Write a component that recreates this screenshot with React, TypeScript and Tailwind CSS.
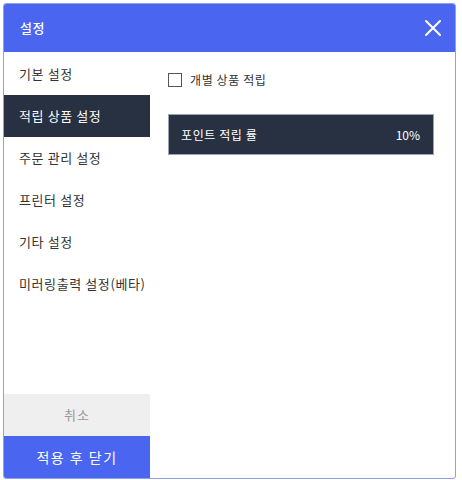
import React from "react";

export default function App() {
  const items = ["기본 설정", "적립 상품 설정", "주문 관리 설정", "프린터 설정", "기타 설정", "미러링출력 설정(베타)"];
  return (
    <div className="w-[462px] h-[480px] bg-white pt-[3px] pl-[3px]" style={{ fontFamily: '"Noto Sans CJK KR", "Noto Sans", sans-serif' }}>
      <div className="w-[453px] h-[476px] border border-[#8da0ee] rounded-[3px] overflow-hidden flex flex-col bg-white">
        <div className="h-[48px] bg-[#4a66f0] flex items-center justify-between pl-[16px] pr-[13px] shrink-0">
          <span className="text-white text-[13px] font-medium tracking-[0.5px]">설정</span>
          <svg width="18" height="18" viewBox="0 0 18 18" fill="none" stroke="white" strokeWidth="2" strokeLinecap="round">
            <path d="M2 2L16 16M16 2L2 16" />
          </svg>
        </div>
        <div className="flex flex-1 pt-[1px]">
          <div className="w-[146px] flex flex-col">
            {items.map((t, i) => (
              <div
                key={t}
                className={
                  i === 1
                    ? "h-[42px] flex items-center pl-[15px] text-[13px] tracking-[0.6px] bg-[#273142] text-white whitespace-nowrap"
                    : "h-[42px] flex items-center pl-[15px] text-[13px] tracking-[0.6px] text-[#333] whitespace-nowrap"
                }
              >
                {t}
              </div>
            ))}
            <div className="flex-1" />
            <div className="h-[42px] flex items-center justify-center bg-[#efefef] text-[#999] text-[13px] tracking-[1px]">취소</div>
            <div className="h-[42px] flex items-center justify-center bg-[#4a66f0] text-white text-[14px] tracking-[1.5px]">적용 후 닫기</div>
          </div>
          <div className="flex-1 pl-[18px] pr-[21px] pt-[20px] flex flex-col">
            <label className="flex items-center gap-[8px] h-[14px]">
              <span className="w-[14px] h-[14px] border border-[#555] bg-white" />
              <span className="text-[12px] text-[#333] tracking-[0.6px]">개별 상품 적립</span>
            </label>
            <div className="mt-[27px] h-[41px] bg-[#273142] border border-[#9aa3b0] flex items-center justify-between pl-[12px] pr-[13px]">
              <span className="text-[12px] text-white tracking-[0.6px]">포인트 적립 률</span>
              <span className="text-[12px] text-white">10%</span>
            </div>
          </div>
        </div>
      </div>
    </div>
  );
}
